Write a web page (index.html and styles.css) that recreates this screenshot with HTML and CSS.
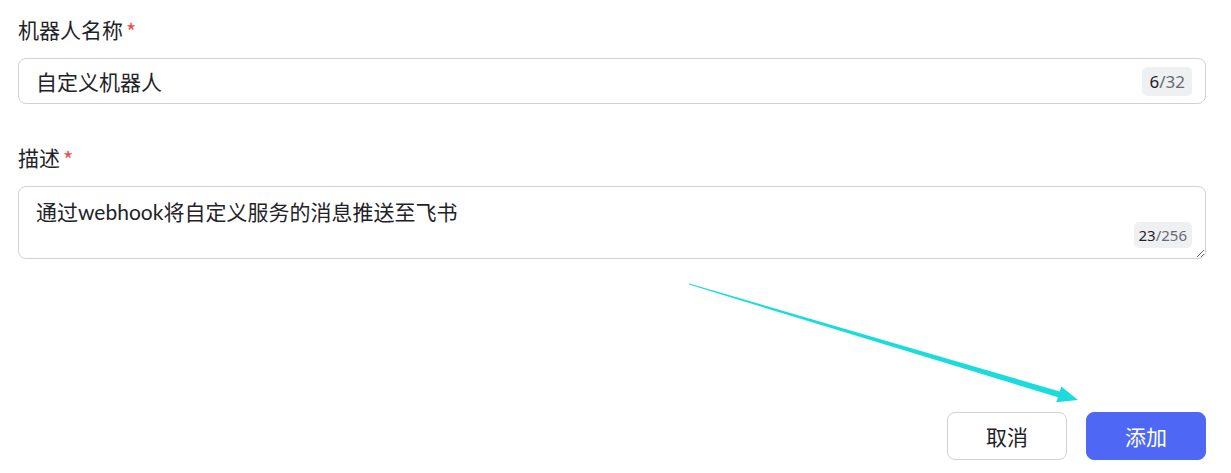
FILE: index.html
```html
<!DOCTYPE html>
<html lang="zh-CN">
<head>
<meta charset="utf-8">
<title>添加机器人</title>
<link rel="stylesheet" href="styles.css">
</head>
<body>
<form class="form">
  <div class="field">
    <label class="label" for="name">机器人名称<span class="req">*</span></label>
    <div class="control">
      <input id="name" class="input" type="text" value="自定义机器人">
      <span class="count count-lg"><span class="cur">6</span>/32</span>
    </div>
  </div>
  <div class="field field-desc">
    <label class="label" for="desc">描述<span class="req">*</span></label>
    <div class="control">
      <textarea id="desc" class="textarea">通过webhook将自定义服务的消息推送至飞书</textarea>
      <span class="count count-sm"><span class="cur">23</span>/256</span>
    </div>
  </div>
  <div class="actions">
    <button type="button" class="btn btn-cancel">取消</button>
    <button type="button" class="btn btn-primary">添加</button>
  </div>
</form>
<svg class="arrow" width="1231" height="473" viewBox="0 0 1231 473">
  <polygon fill="#1adcdc" points="689.1,283.4 1059.7,391.4 1061.3,386.4 1078,400 1056.3,402.2 1057.9,397.2 688.9,284.6"/>
</svg>
</body>
</html>
```
FILE: styles.css
```css
html, body {
  margin: 0;
  padding: 0;
  background: #ffffff;
}
body {
  font-family: "Lato", "Noto Sans CJK SC", "Noto Sans", sans-serif;
  color: #1f2329;
  width: 1231px;
  height: 473px;
  overflow: hidden;
  position: relative;
}
.form {
  padding: 16px 25px 0 18px;
  display: flex;
  flex-direction: column;
}
.field {
  display: flex;
  flex-direction: column;
}
.field-desc {
  margin-top: 40px;
}
.label {
  font-size: 21px;
  line-height: 28px;
  height: 28px;
  margin-bottom: 14px;
  color: #1f2329;
  display: flex;
  align-items: center;
}
.req {
  color: #f54a45;
  margin-left: 3px;
  font-family: "Noto Sans CJK SC", sans-serif;
  font-size: 22px;
  line-height: 28px;
}
.control {
  position: relative;
}
.input, .textarea {
  box-sizing: border-box;
  width: 100%;
  border: 1px solid #d0d3d6;
  border-radius: 8px;
  font-family: inherit;
  font-size: 21px;
  color: #1f2329;
  outline: none;
  background: #fff;
  margin: 0;
}
.input {
  height: 46px;
  padding: 0 80px 0 17px;
  display: block;
}
.textarea {
  height: 73px;
  padding: 11px 80px 0 17px;
  line-height: 28px;
  resize: vertical;
  display: block;
  overflow: hidden;
}
.count {
  position: absolute;
  right: 14px;
  background: #eff0f1;
  color: #646a73;
  border-radius: 5px;
  line-height: 1;
  font-family: "Noto Sans", sans-serif;
  display: flex;
  align-items: center;
  justify-content: center;
}
.cur {
  color: #1f2329;
}
.count-lg {
  top: 9px;
  height: 29px;
  padding: 0 7px;
  font-size: 17px;
}
.count-sm {
  bottom: 11px;
  height: 26px;
  padding: 0 5px;
  font-size: 15px;
}
.actions {
  margin-top: 153px;
  display: flex;
  justify-content: flex-end;
  gap: 19px;
}
.btn {
  box-sizing: border-box;
  width: 120px;
  height: 48px;
  border-radius: 8px;
  font-family: inherit;
  font-size: 21px;
  cursor: pointer;
  padding: 0;
}
.btn-cancel {
  background: #fff;
  border: 1px solid #d0d3d6;
  color: #1f2329;
}
.btn-primary {
  background: #4e68f5;
  border: 1px solid #4e68f5;
  color: #fff;
}
.arrow {
  position: absolute;
  left: 0;
  top: 0;
  pointer-events: none;
}
```
